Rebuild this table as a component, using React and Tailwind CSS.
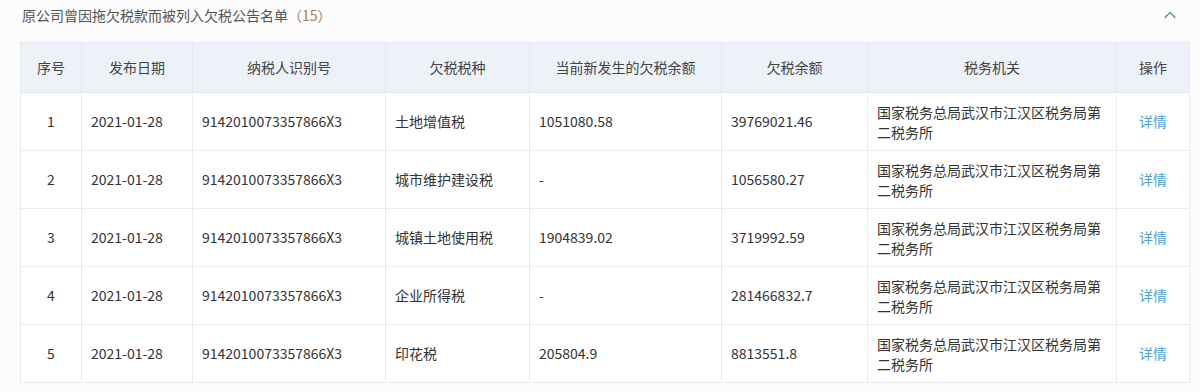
import { ChevronUp } from 'lucide-react';

const rows = [
  { no: 1, date: '2021-01-28', id: '9142010073357866X3', kind: '土地增值税', fresh: '1051080.58', balance: '39769021.46' },
  { no: 2, date: '2021-01-28', id: '9142010073357866X3', kind: '城市维护建设税', fresh: '-', balance: '1056580.27' },
  { no: 3, date: '2021-01-28', id: '9142010073357866X3', kind: '城镇土地使用税', fresh: '1904839.02', balance: '3719992.59' },
  { no: 4, date: '2021-01-28', id: '9142010073357866X3', kind: '企业所得税', fresh: '-', balance: '281466832.7' },
  { no: 5, date: '2021-01-28', id: '9142010073357866X3', kind: '印花税', fresh: '205804.9', balance: '8813551.8' },
];

const heads = ['序号', '发布日期', '纳税人识别号', '欠税税种', '当前新发生的欠税余额', '欠税余额', '税务机关', '操作'];

export default function App() {
  return (
    <div
      className="h-[392px] w-[1200px] bg-[#fcfcfd] px-5 text-[14px] text-[#333]"
      style={{ fontFamily: '"Noto Sans CJK SC", "Noto Sans", sans-serif' }}
    >
      <div className="flex h-[30px] items-center justify-between pl-[2px]">
        <h2 className="font-normal text-[#555]">
          原公司曾因拖欠税款而被列入欠税公告名单<span className="text-[#b07a55]">（15）</span>
        </h2>
        <ChevronUp className="h-5 w-5 text-[#4f8f94]" strokeWidth={1.5} />
      </div>

      <table className="mt-[12px] w-[1169px] table-fixed border-collapse bg-white">
        <colgroup>
          <col className="w-[61px]" />
          <col className="w-[111px]" />
          <col className="w-[193px]" />
          <col className="w-[144px]" />
          <col className="w-[192px]" />
          <col className="w-[146px]" />
          <col className="w-[249px]" />
          <col className="w-[73px]" />
        </colgroup>
        <thead>
          <tr className="h-[50px] bg-[#edf1f8]">
            {heads.map((h) => (
              <th key={h} className="border border-[#e4e8ef] font-normal text-[#444]">
                {h}
              </th>
            ))}
          </tr>
        </thead>
        <tbody>
          {rows.map((r) => (
            <tr key={r.no} className="h-[58px]">
              <td className="border border-[#e8ebf0] text-center">{r.no}</td>
              <td className="border border-[#e8ebf0] px-[9px]">{r.date}</td>
              <td className="border border-[#e8ebf0] px-[9px]">{r.id}</td>
              <td className="border border-[#e8ebf0] px-[9px]">{r.kind}</td>
              <td className="border border-[#e8ebf0] px-[9px]">{r.fresh}</td>
              <td className="border border-[#e8ebf0] px-[9px]">{r.balance}</td>
              <td className="border border-[#e8ebf0] px-[9px] leading-[20px]">
                国家税务总局武汉市江汉区税务局第二税务所
              </td>
              <td className="border border-[#e8ebf0] text-center text-[#4aa3d4]">详情</td>
            </tr>
          ))}
        </tbody>
      </table>
    </div>
  );
}
